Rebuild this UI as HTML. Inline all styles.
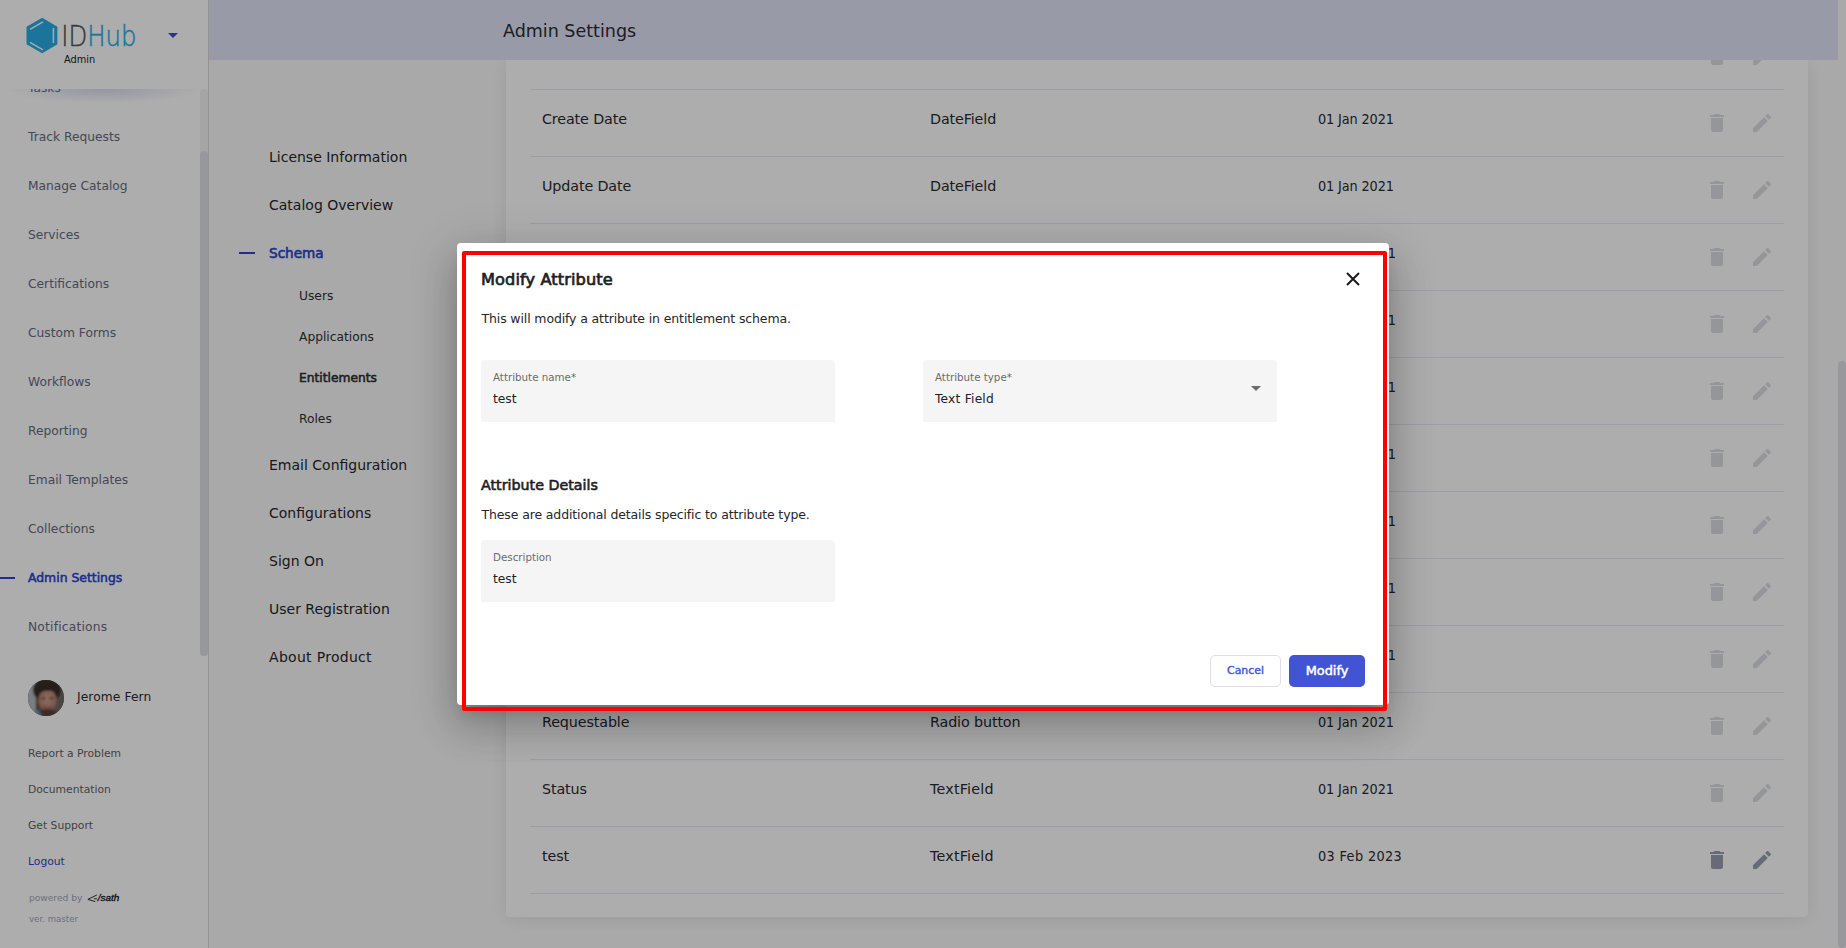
<!DOCTYPE html>
<html lang="en">
<head>
<meta charset="utf-8">
<title>IDHub Admin - Admin Settings</title>
<style>
*{box-sizing:border-box;margin:0;padding:0}
html,body{width:1846px;height:948px;overflow:hidden}
body{font-family:"DejaVu Sans","Liberation Sans",sans-serif;background:#fafafa;color:#222;position:relative}
.abs{position:absolute;white-space:nowrap}
/* sidebar */
#sidebar{position:absolute;left:0;top:0;width:209px;height:948px;background:#fff;border-right:1px solid #d9d9d9}
#sb-list{position:absolute;left:0;top:89px;width:208px;height:567px;overflow:hidden}
.sbi{position:absolute;left:28px;font-size:12.25px;color:#666b80;line-height:20px;white-space:nowrap}
.sbi.act{color:#2e45d2;-webkit-text-stroke:.55px #2e45d2;font-size:12.4px}
#sb-shadow{position:absolute;left:0;top:0;width:200px;height:14px;background:radial-gradient(ellipse 48% 100% at 52% 0,rgba(90,100,190,.22),rgba(90,100,190,0) 100%)}
#sb-track{position:absolute;left:200px;top:89px;width:8px;height:567px;border-radius:4px;background:#f4f4f4}
#sb-thumb{position:absolute;left:200px;top:151px;width:8px;height:505px;border-radius:4px;background:#dfe0e6}
.sbl{position:absolute;left:28px;font-size:10.75px;color:#5f6368;line-height:16px;white-space:nowrap}
/* header */
#header{position:absolute;left:209px;top:0;width:1629px;height:60px;background:#e1e4f7}
#header span{position:absolute;left:294px;top:19px;font-size:17.5px;line-height:24px;color:#2b2b33}
/* settings nav */
.nav{position:absolute;left:269px;font-size:14px;line-height:20px;color:#26262b;white-space:nowrap}
.nav2{position:absolute;left:299px;font-size:12.25px;line-height:18px;color:#2e2e33;white-space:nowrap}
/* card */
#card{position:absolute;left:506px;top:60px;width:1302px;height:857px;background:#fff;border-radius:0 0 4px 4px;box-shadow:0 2px 18px rgba(0,0,0,.09)}
.row{position:absolute;left:24px;width:1254px;height:67px;border-bottom:1px solid #e7e8f0;font-size:14.3px;letter-spacing:-.12px;color:#2a2a2e}
.row span{position:absolute;top:18px;line-height:22px;white-space:nowrap}
.row .c1{left:12px}.row .c2{left:400px}.row .c3{left:788px;font-family:"DejaVu Sans Condensed","Liberation Sans",sans-serif}
.row svg{position:absolute;top:21px;width:24px;height:24px;fill:#dcdde4}
.row svg.del{left:1175px}.row svg.ed{left:1220px}
.row.on svg{fill:#999db0}
/* scrollbar */
#vtrack{position:absolute;left:1838px;top:0;width:8px;height:948px;background:#fafafa}
#vthumb{position:absolute;left:1838px;top:361px;width:8px;height:587px;border-radius:4px;background:#dfe0e6}
/* overlay */
#overlay{position:absolute;left:0;top:0;width:1846px;height:948px;background:rgba(0,0,0,.32)}
/* dialog */
#dialog{position:absolute;left:457px;top:243px;width:932px;height:462px;background:#fff;border-radius:4px;box-shadow:0 11px 15px -7px rgba(0,0,0,.2),0 24px 38px 3px rgba(0,0,0,.14),0 9px 46px 8px rgba(0,0,0,.12)}
#redbox{position:absolute;left:462px;top:251px;width:925px;height:460px;border:4px solid #fe0000;border-radius:2px}
.field{position:absolute;width:354px;height:62px;background:#f5f5f5;border-radius:4px 4px 0 0}
.field .lb{position:absolute;left:12px;top:10px;font-size:10.3px;line-height:14px;color:#6b6b6b;white-space:nowrap}
.field .val{position:absolute;left:12px;top:30px;font-size:12.25px;line-height:18px;color:#222;white-space:nowrap}
</style>
</head>
<body>
<div id="sidebar">
  <div id="sb-list">
    <div class="sbi" style="top:-11px">Tasks</div>
    <div class="sbi" style="top:38px">Track Requests</div>
    <div class="sbi" style="top:87px">Manage Catalog</div>
    <div class="sbi" style="top:136px">Services</div>
    <div class="sbi" style="top:185px">Certifications</div>
    <div class="sbi" style="top:234px">Custom Forms</div>
    <div class="sbi" style="top:283px">Workflows</div>
    <div class="sbi" style="top:332px">Reporting</div>
    <div class="sbi" style="top:381px">Email Templates</div>
    <div class="sbi" style="top:430px">Collections</div>
    <div class="sbi act" style="top:479px">Admin Settings</div>
    <div class="sbi" style="top:528px;letter-spacing:.2px">Notifications</div>
    <div style="position:absolute;left:0;top:488px;width:15px;height:2px;background:#2e45d2"></div>
    <div id="sb-shadow"></div>
  </div>
  <div id="sb-track"></div>
  <div id="sb-thumb"></div>
  <!-- logo -->
  <svg class="abs" style="left:20px;top:10px" width="130" height="50" viewBox="20 10 130 50">
    <polygon points="42.2,17.8 57.4,26.8 57.4,44.2 42.2,53.2 26.5,44.2 26.5,26.8" fill="#29abe2"/>
    <path d="M30 29.4 L43 21.9 M30 42.3 L43 49.8 M53.4 28 L53.4 43" stroke="#fff" stroke-width="1.5" fill="none" stroke-opacity=".95"/>
    <text x="61.2" y="46.2" font-family="DejaVu Sans, Liberation Sans, sans-serif" font-weight="200" font-size="29" textLength="75.4" lengthAdjust="spacingAndGlyphs" stroke-width=".45" paint-order="stroke"><tspan fill="#55565a" stroke="#55565a">ID</tspan><tspan fill="#29abe2" stroke="#29abe2">Hub</tspan></text>
  </svg>
  <div class="abs" style="left:64px;top:53px;font-size:9.8px;line-height:14px;color:#222">Admin</div>
  <div class="abs" style="left:168px;top:33px;width:0;height:0;border-left:5px solid transparent;border-right:5px solid transparent;border-top:5px solid #4343e6"></div>
  <!-- user -->
  <svg class="abs" style="left:28px;top:680px" width="36" height="36" viewBox="0 0 36 36">
    <defs><clipPath id="avc"><circle cx="18" cy="18" r="18"/></clipPath>
    <filter id="avb" x="-20%" y="-20%" width="140%" height="140%"><feGaussianBlur stdDeviation="1.100"/></filter>
    <radialGradient id="avf" cx="50%" cy="42%" r="62%"><stop offset="0" stop-color="#d3a08c"/><stop offset=".65" stop-color="#b98674"/><stop offset="1" stop-color="#7a574b"/></radialGradient></defs>
    <g clip-path="url(#avc)">
      <rect width="36" height="36" fill="#5d514d"/>
      <g filter="url(#avb)">
        <rect x="-4" y="-4" width="12" height="44" fill="#b4b9be"/>
        <rect x="26" y="-4" width="14" height="44" fill="#6d6763"/>
        <ellipse cx="19" cy="10" rx="14" ry="12" fill="#392d29"/>
        <ellipse cx="19.500" cy="21" rx="9.500" ry="11.500" fill="url(#avf)"/>
        <path d="M7 15 Q9 3 20 3.500 Q31 4 31.500 16 Q27 9.500 21 11 Q13 9.500 10 17 Z" fill="#372b27"/>
        <ellipse cx="19.500" cy="33" rx="9" ry="4" fill="#5a4037"/>
        <rect x="13.500" y="17.600" width="4" height="1.600" fill="#5b3f36"/><rect x="21.500" y="17.600" width="4" height="1.600" fill="#5b3f36"/>
        <path d="M15 26.500 Q19.500 28.800 24 26.500" stroke="#8a5a4f" stroke-width="1.200" fill="none"/>
        <path d="M4 36 L10 29 L14 36 Z" fill="#6f8fb0"/>
      </g>
    </g>
  </svg>
  <div class="abs" style="left:77px;top:687px;font-size:12.25px;letter-spacing:.1px;line-height:20px;color:#2a2a2e">Jerome Fern</div>
  <div class="sbl" style="top:746px">Report a Problem</div>
  <div class="sbl" style="top:782px">Documentation</div>
  <div class="sbl" style="top:818px">Get Support</div>
  <div class="sbl" style="top:854px;color:#2e45d2">Logout</div>
  <div class="abs" style="left:29px;top:891px;font-size:9.1px;line-height:14px;color:#a0a6bd">powered by</div>
  <svg class="abs" style="left:86px;top:890px" width="38" height="16" viewBox="86 890 38 16">
    <path d="M96.600 895.100 L87.900 899.400 L94.900 901.500 M94.300 898.800 L96.500 898.800" stroke="#111" stroke-width=".85" fill="none" stroke-linecap="round" stroke-linejoin="round"/>
    <text x="97.800" y="901.300" font-family="Liberation Sans, sans-serif" font-size="9.600" font-weight="400" font-style="italic" fill="#111" stroke="#111" stroke-width=".3" textLength="21.600" lengthAdjust="spacingAndGlyphs">/sath</text>
  </svg>
  <div class="abs" style="left:29px;top:912px;font-size:8.65px;line-height:14px;color:#a0a6bd">ver. master</div>
</div>


<!-- settings navigation -->
<div class="nav" style="top:147px">License Information</div>
<div class="nav" style="top:195px">Catalog Overview</div>
<div class="abs" style="left:239px;top:252px;width:16px;height:2px;background:#2e45d2"></div>
<div class="nav" style="top:243px;color:#2e45d2;-webkit-text-stroke:.6px #2e45d2;font-size:13.6px">Schema</div>
<div class="nav2" style="top:287px">Users</div>
<div class="nav2" style="top:328px">Applications</div>
<div class="nav2" style="top:369px;-webkit-text-stroke:.55px #2e2e33;font-size:12.25px">Entitlements</div>
<div class="nav2" style="top:410px">Roles</div>
<div class="nav" style="top:455px">Email Configuration</div>
<div class="nav" style="top:503px">Configurations</div>
<div class="nav" style="top:551px">Sign On</div>
<div class="nav" style="top:599px">User Registration</div>
<div class="nav" style="top:647px;letter-spacing:.3px">About Product</div>

<div id="card">
  <div class="row" style="top:-37px"><span class="c1">Name</span><span class="c2" style="letter-spacing:.2px">TextField</span><span class="c3">01 Jan 2021</span><svg class="del" viewBox="0 0 24 24"><path d="M6 19c0 1.1.9 2 2 2h8c1.1 0 2-.9 2-2V7H6v12zM19 4h-3.500l-1-1h-5l-1 1H5v2h14V4z"/></svg><svg class="ed" viewBox="0 0 24 24"><path d="M3 17.250V21h3.750L17.810 9.940l-3.750-3.750L3 17.250zM20.710 7.040c.39-.39.39-1.020 0-1.410l-2.340-2.340c-.39-.39-1.020-.39-1.410 0l-1.830 1.830 3.750 3.750 1.830-1.830z"/></svg></div>
  <div class="row" style="top:30px"><span class="c1">Create Date</span><span class="c2">DateField</span><span class="c3">01 Jan 2021</span><svg class="del" viewBox="0 0 24 24"><path d="M6 19c0 1.1.9 2 2 2h8c1.1 0 2-.9 2-2V7H6v12zM19 4h-3.500l-1-1h-5l-1 1H5v2h14V4z"/></svg><svg class="ed" viewBox="0 0 24 24"><path d="M3 17.250V21h3.750L17.810 9.940l-3.750-3.750L3 17.250zM20.710 7.040c.39-.39.39-1.020 0-1.410l-2.340-2.340c-.39-.39-1.020-.39-1.410 0l-1.830 1.830 3.750 3.750 1.830-1.830z"/></svg></div>
  <div class="row" style="top:97px"><span class="c1">Update Date</span><span class="c2">DateField</span><span class="c3">01 Jan 2021</span><svg class="del" viewBox="0 0 24 24"><path d="M6 19c0 1.1.9 2 2 2h8c1.1 0 2-.9 2-2V7H6v12zM19 4h-3.500l-1-1h-5l-1 1H5v2h14V4z"/></svg><svg class="ed" viewBox="0 0 24 24"><path d="M3 17.250V21h3.750L17.810 9.940l-3.750-3.750L3 17.250zM20.710 7.040c.39-.39.39-1.020 0-1.410l-2.340-2.340c-.39-.39-1.020-.39-1.410 0l-1.830 1.830 3.750 3.750 1.830-1.830z"/></svg></div>
  <div class="row" style="top:164px"><span class="c1">Description</span><span class="c2">TextArea</span><span class="c3" style="left:790px">01 Jan 2021</span><svg class="del" viewBox="0 0 24 24"><path d="M6 19c0 1.1.9 2 2 2h8c1.1 0 2-.9 2-2V7H6v12zM19 4h-3.500l-1-1h-5l-1 1H5v2h14V4z"/></svg><svg class="ed" viewBox="0 0 24 24"><path d="M3 17.250V21h3.750L17.810 9.940l-3.750-3.750L3 17.250zM20.710 7.040c.39-.39.39-1.020 0-1.410l-2.340-2.340c-.39-.39-1.020-.39-1.410 0l-1.830 1.830 3.750 3.750 1.830-1.830z"/></svg></div>
  <div class="row" style="top:231px"><span class="c1">Application</span><span class="c2">Dropdown</span><span class="c3" style="left:790px">01 Jan 2021</span><svg class="del" viewBox="0 0 24 24"><path d="M6 19c0 1.1.9 2 2 2h8c1.1 0 2-.9 2-2V7H6v12zM19 4h-3.500l-1-1h-5l-1 1H5v2h14V4z"/></svg><svg class="ed" viewBox="0 0 24 24"><path d="M3 17.250V21h3.750L17.810 9.940l-3.750-3.750L3 17.250zM20.710 7.040c.39-.39.39-1.020 0-1.410l-2.340-2.340c-.39-.39-1.020-.39-1.410 0l-1.830 1.830 3.750 3.750 1.830-1.830z"/></svg></div>
  <div class="row" style="top:298px"><span class="c1">Entitlement Type</span><span class="c2">Dropdown</span><span class="c3" style="left:790px">01 Jan 2021</span><svg class="del" viewBox="0 0 24 24"><path d="M6 19c0 1.1.9 2 2 2h8c1.1 0 2-.9 2-2V7H6v12zM19 4h-3.500l-1-1h-5l-1 1H5v2h14V4z"/></svg><svg class="ed" viewBox="0 0 24 24"><path d="M3 17.250V21h3.750L17.810 9.940l-3.750-3.750L3 17.250zM20.710 7.040c.39-.39.39-1.020 0-1.410l-2.340-2.340c-.39-.39-1.020-.39-1.410 0l-1.830 1.830 3.750 3.750 1.830-1.830z"/></svg></div>
  <div class="row" style="top:365px"><span class="c1">Owner</span><span class="c2" style="letter-spacing:.2px">TextField</span><span class="c3" style="left:790px">01 Jan 2021</span><svg class="del" viewBox="0 0 24 24"><path d="M6 19c0 1.1.9 2 2 2h8c1.1 0 2-.9 2-2V7H6v12zM19 4h-3.500l-1-1h-5l-1 1H5v2h14V4z"/></svg><svg class="ed" viewBox="0 0 24 24"><path d="M3 17.250V21h3.750L17.810 9.940l-3.750-3.750L3 17.250zM20.710 7.040c.39-.39.39-1.020 0-1.410l-2.340-2.340c-.39-.39-1.020-.39-1.410 0l-1.830 1.830 3.750 3.750 1.830-1.830z"/></svg></div>
  <div class="row" style="top:432px"><span class="c1">Risk Level</span><span class="c2">Dropdown</span><span class="c3" style="left:790px">01 Jan 2021</span><svg class="del" viewBox="0 0 24 24"><path d="M6 19c0 1.1.9 2 2 2h8c1.1 0 2-.9 2-2V7H6v12zM19 4h-3.500l-1-1h-5l-1 1H5v2h14V4z"/></svg><svg class="ed" viewBox="0 0 24 24"><path d="M3 17.250V21h3.750L17.810 9.940l-3.750-3.750L3 17.250zM20.710 7.040c.39-.39.39-1.020 0-1.410l-2.340-2.340c-.39-.39-1.020-.39-1.410 0l-1.830 1.830 3.750 3.750 1.830-1.830z"/></svg></div>
  <div class="row" style="top:499px"><span class="c1">Approval Workflow</span><span class="c2">Dropdown</span><span class="c3" style="left:790px">01 Jan 2021</span><svg class="del" viewBox="0 0 24 24"><path d="M6 19c0 1.1.9 2 2 2h8c1.1 0 2-.9 2-2V7H6v12zM19 4h-3.500l-1-1h-5l-1 1H5v2h14V4z"/></svg><svg class="ed" viewBox="0 0 24 24"><path d="M3 17.250V21h3.750L17.810 9.940l-3.750-3.750L3 17.250zM20.710 7.040c.39-.39.39-1.020 0-1.410l-2.340-2.340c-.39-.39-1.020-.39-1.410 0l-1.830 1.830 3.750 3.750 1.830-1.830z"/></svg></div>
  <div class="row" style="top:566px"><span class="c1">Certifiable</span><span class="c2">Radio button</span><span class="c3" style="left:790px">01 Jan 2021</span><svg class="del" viewBox="0 0 24 24"><path d="M6 19c0 1.1.9 2 2 2h8c1.1 0 2-.9 2-2V7H6v12zM19 4h-3.500l-1-1h-5l-1 1H5v2h14V4z"/></svg><svg class="ed" viewBox="0 0 24 24"><path d="M3 17.250V21h3.750L17.810 9.940l-3.750-3.750L3 17.250zM20.710 7.040c.39-.39.39-1.020 0-1.410l-2.340-2.340c-.39-.39-1.020-.39-1.410 0l-1.830 1.830 3.750 3.750 1.830-1.830z"/></svg></div>
  <div class="row" style="top:633px"><span class="c1">Requestable</span><span class="c2">Radio button</span><span class="c3">01 Jan 2021</span><svg class="del" viewBox="0 0 24 24"><path d="M6 19c0 1.1.9 2 2 2h8c1.1 0 2-.9 2-2V7H6v12zM19 4h-3.500l-1-1h-5l-1 1H5v2h14V4z"/></svg><svg class="ed" viewBox="0 0 24 24"><path d="M3 17.250V21h3.750L17.810 9.940l-3.750-3.750L3 17.250zM20.710 7.040c.39-.39.39-1.020 0-1.410l-2.340-2.340c-.39-.39-1.020-.39-1.410 0l-1.830 1.830 3.750 3.750 1.830-1.830z"/></svg></div>
  <div class="row" style="top:700px"><span class="c1">Status</span><span class="c2" style="letter-spacing:.2px">TextField</span><span class="c3">01 Jan 2021</span><svg class="del" viewBox="0 0 24 24"><path d="M6 19c0 1.1.9 2 2 2h8c1.1 0 2-.9 2-2V7H6v12zM19 4h-3.500l-1-1h-5l-1 1H5v2h14V4z"/></svg><svg class="ed" viewBox="0 0 24 24"><path d="M3 17.250V21h3.750L17.810 9.940l-3.750-3.750L3 17.250zM20.710 7.040c.39-.39.39-1.020 0-1.410l-2.340-2.340c-.39-.39-1.020-.39-1.410 0l-1.830 1.830 3.750 3.750 1.830-1.830z"/></svg></div>
  <div class="row on" style="top:767px"><span class="c1">test</span><span class="c2" style="letter-spacing:.2px">TextField</span><span class="c3" style="letter-spacing:.38px">03 Feb 2023</span><svg class="del" viewBox="0 0 24 24"><path d="M6 19c0 1.1.9 2 2 2h8c1.1 0 2-.9 2-2V7H6v12zM19 4h-3.500l-1-1h-5l-1 1H5v2h14V4z"/></svg><svg class="ed" viewBox="0 0 24 24"><path d="M3 17.250V21h3.750L17.810 9.940l-3.750-3.750L3 17.250zM20.710 7.040c.39-.39.39-1.020 0-1.410l-2.340-2.340c-.39-.39-1.020-.39-1.410 0l-1.830 1.830 3.750 3.750 1.830-1.830z"/></svg></div>
</div>

<div id="header"><span>Admin Settings</span></div>
<div id="vtrack"></div>
<div id="vthumb"></div>

<div id="overlay"></div>
<div id="dialog">
  <div class="abs" style="left:24px;top:26px;font-size:16.2px;letter-spacing:.1px;line-height:22px;-webkit-text-stroke:.7px #1e1e24;color:#1e1e24">Modify Attribute</div>
  <svg class="abs" style="left:889px;top:29px" width="14" height="14" viewBox="0 0 14 14"><path d="M1 1L13 13M13 1L1 13" stroke="#1a1a1a" stroke-width="2" fill="none"/></svg>
  <div class="abs" style="left:24.5px;top:67px;font-size:12.5px;letter-spacing:-.13px;line-height:18px;color:#26262b">This will modify a attribute in entitlement schema.</div>
  <div class="field" style="left:24px;top:117px"><div class="lb">Attribute name*</div><div class="val">test</div></div>
  <div class="field" style="left:466px;top:117px"><div class="lb">Attribute type*</div><div class="val" style="letter-spacing:.2px">Text Field</div>
    <div style="position:absolute;left:328px;top:26px;width:0;height:0;border-left:5px solid transparent;border-right:5px solid transparent;border-top:5px solid #6b6b6b"></div></div>
  <div class="abs" style="left:24px;top:232px;font-size:14.25px;line-height:20px;-webkit-text-stroke:.62px #1e1e24;color:#1e1e24">Attribute Details</div>
  <div class="abs" style="left:24.5px;top:263px;font-size:12.5px;letter-spacing:-.13px;line-height:18px;color:#26262b">These are additional details specific to attribute type.</div>
  <div class="field" style="left:24px;top:297px"><div class="lb">Description</div><div class="val">test</div></div>
  <div class="abs" style="left:753px;top:412px;width:71px;height:32px;border:1px solid #dcdeea;border-radius:5px;text-align:center;font-size:10.9px;line-height:30px;-webkit-text-stroke:.4px #4254d4;color:#4254d4">Cancel</div>
  <div class="abs" style="left:832px;top:412px;width:76px;height:32px;background:#4254d4;border-radius:5px;text-align:center;font-size:12.9px;line-height:32px;-webkit-text-stroke:.5px #fff;color:#fff">Modify</div>
</div>
<div id="redbox"></div>
</body>
</html>
